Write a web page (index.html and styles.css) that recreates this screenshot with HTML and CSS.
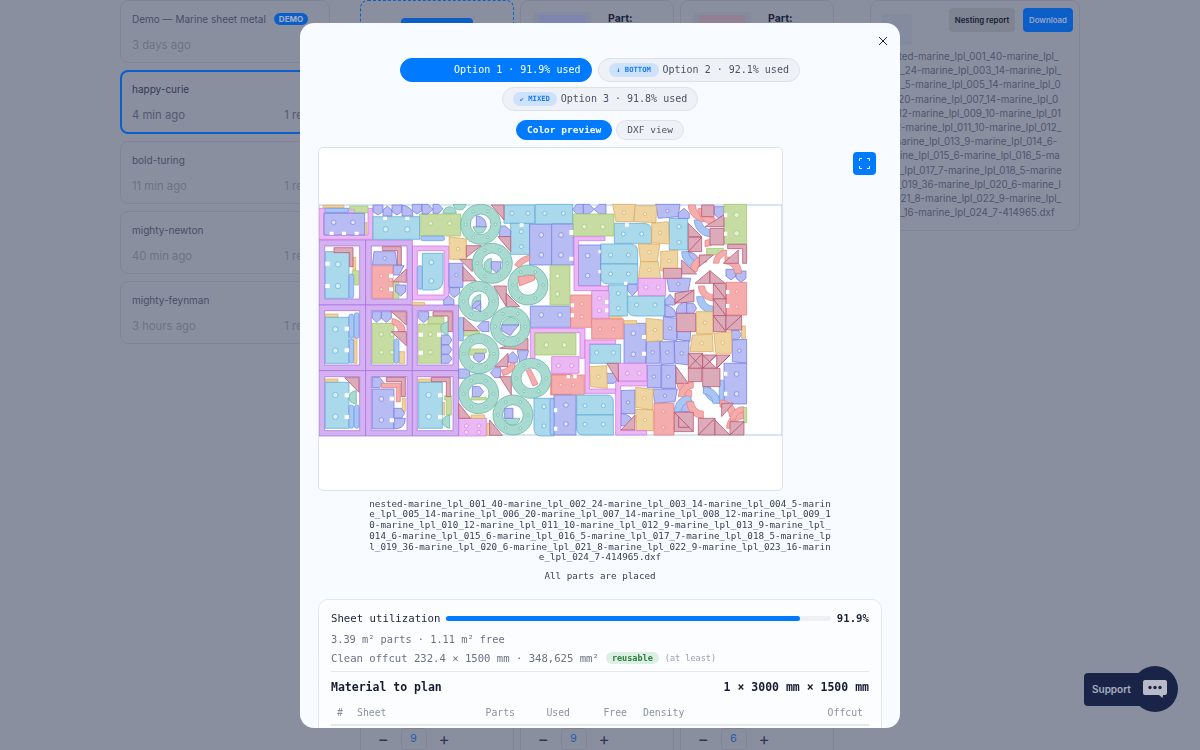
FILE: index.html
```html
<!DOCTYPE html>
<html lang="en">
<head>
    <meta charset="UTF-8">
    <title>Nesting results</title>
    <link rel="stylesheet" href="styles.css">
</head>
<body>

<div class="app">
    <div class="sidebar">
        <div class="job">
            <div class="job-title">Demo — Marine sheet metal <span class="demo">DEMO</span></div>
            <div class="job-sub"><span>3 days ago</span></div>
        </div>
        <div class="job job-active">
            <div class="job-title">happy-curie</div>
            <div class="job-sub"><span>4 min ago</span><span>1 result</span></div>
        </div>
        <div class="job">
            <div class="job-title">bold-turing</div>
            <div class="job-sub"><span>11 min ago</span><span>1 result</span></div>
        </div>
        <div class="job">
            <div class="job-title">mighty-newton</div>
            <div class="job-sub"><span>40 min ago</span><span>1 result</span></div>
        </div>
        <div class="job">
            <div class="job-title">mighty-feynman</div>
            <div class="job-sub"><span>3 hours ago</span><span>1 result</span></div>
        </div>
    </div>

    <div class="parts">
        <div class="part part-add">
            <div class="add-btn"></div>
        </div>
        <div class="part">
            <div class="part-head"><div class="thumb"><i class="thumb-pe"></i></div><strong>Part:</strong></div>
        </div>
        <div class="part">
            <div class="part-head"><div class="thumb"><i class="thumb-ro"></i></div><strong>Part:</strong></div>
        </div>
        <div class="part part-low">
            <div class="part-head"><strong>Part:</strong></div>
            <div class="stepper"><span>−</span><b>9</b><span>+</span></div>
        </div>
        <div class="part part-low">
            <div class="part-head"><strong>Part:</strong></div>
            <div class="stepper"><span>−</span><b>9</b><span>+</span></div>
        </div>
        <div class="part part-low">
            <div class="part-head"><strong>Part:</strong></div>
            <div class="stepper"><span>−</span><b>6</b><span>+</span></div>
        </div>
    </div>

    <div class="summary">
        <div class="summary-top">
            <div class="thumb thumb-small"></div>
            <button class="btn">Nesting report</button>
            <button class="btn btn-blue">Download</button>
        </div>
        <div class="summary-name">nested-marine_lpl_001_40-marine_lpl_002_24-marine_lpl_003_14-marine_lpl_004_5-marine_lpl_005_14-marine_lpl_006_20-marine_lpl_007_14-marine_lpl_008_12-marine_lpl_009_10-marine_lpl_010_12-marine_lpl_011_10-marine_lpl_012_9-marine_lpl_013_9-marine_lpl_014_6-marine_lpl_015_6-marine_lpl_016_5-marine_lpl_017_7-marine_lpl_018_5-marine_lpl_019_36-marine_lpl_020_6-marine_lpl_021_8-marine_lpl_022_9-marine_lpl_023_16-marine_lpl_024_7-414965.dxf</div>
    </div>
</div>

<div class="support">
    <span class="support-label">Support</span>
    <span class="support-round">
        <svg width="26" height="20" viewBox="0 0 26 20">
            <path fill="#fff" d="M3 1H23Q25 1 25 3V14Q25 16 23 16H21L20.500 19L17 16H3Q1 16 1 14V3Q1 1 3 1Z"/>
            <circle cx="8" cy="8.500" r="1.700" fill="#1d2849"/>
            <circle cx="13" cy="8.500" r="1.700" fill="#1d2849"/>
            <circle cx="18" cy="8.500" r="1.700" fill="#1d2849"/>
        </svg>
    </span>
</div>

<div class="overlay">
    <div class="modal">
        <svg class="close" width="10" height="10" viewBox="0 0 10 10">
            <path d="M1 1L9 9M9 1L1 9" stroke="#1f2937" stroke-width="1"/>
        </svg>

        <div class="options">
            <div class="chip chip-on"><span class="tag tag-blank"></span>Option 1 · 91.9% used</div>
            <div class="chip"><span class="tag">↓ BOTTOM</span>Option 2 · 92.1% used</div>
            <div class="chip"><span class="tag">⇙ MIXED</span>Option 3 · 91.8% used</div>
        </div>

        <div class="views">
            <div class="view view-on">Color preview</div>
            <div class="view">DXF view</div>
        </div>

        <div class="preview-row">
            <div class="preview">
                <svg class="nest" width="463" height="342" viewBox="319 148 463 342">
                    <defs>
                        <g id="ring">
                            <path fill-rule="evenodd" d="M-60 0A60 60 0 1 0 60 0A60 60 0 1 0 -60 0ZM-31 0A31 31 0 1 1 31 0A31 31 0 1 1 -31 0Z"/>
                            <circle class="h" cx="45" r="4"/><circle class="h" cx="-45" r="4"/>
                            <circle class="h" cx="22" cy="39" r="4"/><circle class="h" cx="-22" cy="39" r="4"/>
                            <circle class="h" cx="22" cy="-39" r="4"/><circle class="h" cx="-22" cy="-39" r="4"/>
                        </g>
                        <path id="arc" d="M50 0A50 50 0 0 1 0 50V29A29 29 0 0 0 29 0Z"/>
                    </defs>
                    <rect class="sheet" x="319" y="205" width="463" height="230"/>

                    <!-- left half of the sheet -->
                    <g transform="translate(318 200) scale(.3333)">
                        <g class="s-pi">
                            <path fill-rule="evenodd" d="M3 25H165V118H3ZM18 38V105H150V38Z"/>
                            <path fill-rule="evenodd" d="M283 138H392V300H283ZM298 152V285H378V152Z"/>
                            <path d="M422 655H505V708H422Z"/>
                            <circle class="h" cx="445" cy="678" r="6"/><circle class="h" cx="483" cy="678" r="6"/><circle class="h" cx="445" cy="697" r="6"/><circle class="h" cx="483" cy="697" r="6"/>
                        </g>
                        <g class="s-pu" fill-rule="evenodd">
                            <path d="M3 120H143V315H3ZM20 138V297H125V138Z"/>
                            <path d="M143 120H283V315H143ZM160 138V297H267V138Z"/>
                            <path d="M3 315H143V512H3ZM20 332V495H125V332Z"/>
                            <path d="M143 315H283V512H143ZM160 332V495H267V332Z"/>
                            <path d="M283 315H422V512H283ZM298 332V495H405V332Z"/>
                            <path d="M3 512H143V708H3ZM20 530V692H125V530Z"/>
                            <path d="M143 512H283V708H143ZM160 530V692H267V530Z"/>
                            <path d="M283 512H422V708H283ZM298 530V692H405V530Z"/>
                        </g>
                        <g class="s-ta">
                            <path d="M15 16H78V23H15Z"/><path d="M138 68H147V103H138Z"/><path d="M105 172H113V210H105Z"/>
                            <path d="M283 307H320V315H283Z"/><path d="M22 342H60V352H22Z"/><path d="M107 412H117V490H107Z"/>
                            <path d="M243 455H260V490H243Z"/><path d="M22 537H60V547H22Z"/><path d="M253 595H262V635H253Z"/>
                            <path d="M302 537H340V547H302Z"/><path d="M373 607H380V645H373Z"/><path d="M460 645H500V655H460Z"/><path d="M507 670H515V706H507Z"/>
                            <path d="M393 110L445 117V178H395Z"/><circle class="h" cx="420" cy="147" r="5"/>
                        </g>
                        <g class="s-gr">
                            <path d="M95 18H150V38H110V28H95Z"/><path d="M103 212H122V255H110V225H103Z"/>
                            <path d="M305 42H428V108H305Z"/><circle class="h" cx="338" cy="70" r="6"/><circle class="h" cx="395" cy="70" r="6"/>
                            <path d="M225 248H243V295H225Z"/><path d="M330 350H378V372H330Z"/>
                            <path d="M163 370H228V490H163Z"/><circle class="h" cx="190" cy="403" r="6"/><circle class="h" cx="222" cy="403" r="6"/><circle class="h" cx="190" cy="457" r="6"/><circle class="h" cx="222" cy="457" r="6"/>
                            <path d="M302 372H370V490H302Z"/><circle class="h" cx="337" cy="403" r="6"/><circle class="h" cx="337" cy="457" r="6"/>
                            <path d="M380 587H400V645H385V600H380Z"/><path d="M437 392H485V408H437Z"/>
                        </g>
                        <g class="s-bl">
                            <path d="M165 50H305V118H165Z"/><circle class="h" cx="203" cy="88" r="8"/><circle class="h" cx="268" cy="88" r="8"/>
                            <path d="M22 155H93V295H22Z"/><circle class="h" cx="60" cy="193" r="8"/><circle class="h" cx="60" cy="258" r="8"/>
                            <path d="M313 160H375V240Q375 270 345 270H313Z"/><circle class="h" cx="340" cy="187" r="7"/><circle class="h" cx="340" cy="243" r="7"/>
                            <path d="M22 352H93V490H22Z"/><circle class="h" cx="52" cy="388" r="8"/><circle class="h" cx="52" cy="452" r="8"/>
                            <path d="M22 547H93V685H22Z"/><circle class="h" cx="52" cy="585" r="8"/><circle class="h" cx="52" cy="650" r="8"/>
                            <path d="M302 547H373V685H302Z"/><circle class="h" cx="332" cy="585" r="8"/><circle class="h" cx="332" cy="650" r="8"/>
                            <path d="M558 15H650V70H558Z"/><circle class="h" cx="582" cy="40" r="6"/><circle class="h" cx="630" cy="40" r="6"/>
                            <path d="M578 70H635V163H578Z"/><circle class="h" cx="610" cy="95" r="6"/><circle class="h" cx="610" cy="140" r="6"/>
                            <path d="M648 595H708V708H670Q648 708 648 685Z"/><circle class="h" cx="678" cy="620" r="6"/><circle class="h" cx="678" cy="678" r="6"/>
                        </g>
                        <g class="s-sl">
                            <rect x="20" y="25" width="72" height="12" rx="6"/><rect x="93" y="222" width="14" height="73" rx="7"/>
                            <rect x="298" y="197" width="15" height="71" rx="7"/><rect x="308" y="108" width="72" height="14" rx="7"/>
                            <rect x="93" y="342" width="14" height="73" rx="7"/><rect x="109" y="338" width="14" height="77" rx="7"/><rect x="93" y="417" width="14" height="73" rx="7"/>
                            <rect x="228" y="417" width="15" height="73" rx="7"/><rect x="93" y="615" width="14" height="70" rx="7"/><rect x="109" y="615" width="14" height="70" rx="7"/>
                            <rect x="422" y="352" width="15" height="71" rx="7"/>
                        </g>
                        <g class="s-pe">
                            <path d="M18 40H140V105H18Z"/><circle class="h" cx="47" cy="67" r="7"/><circle class="h" cx="105" cy="67" r="7"/>
                            <path d="M165 15H195V35L180 45L165 35Z"/><path d="M195 30L208 18L222 30V48H195Z"/><path d="M222 15H252V35L237 45L222 35Z"/>
                            <path d="M252 15Q285 20 285 48H252Z"/><path d="M283 13H312V32L297 42L283 32Z"/><path d="M312 13H330L345 28L330 42H312Z"/><path d="M345 13H362L375 26L362 40H345Z"/>
                            <path d="M168 155H232L237 195H163Z"/><circle class="h" cx="200" cy="175" r="5"/>
                            <path d="M225 197H258L243 225L225 225Z"/><path d="M233 255H263V275L248 288L233 275Z"/>
                            <path d="M393 190H435V262H393Z"/><circle class="h" cx="415" cy="225" r="5"/>
                            <path d="M395 263H425V280L408 293L395 280Z"/><path d="M392 287L408 300V314H377V300Z"/>
                            <path d="M163 335H190V355L176 367L163 355Z"/><path d="M190 335H220V355L205 367L190 355Z"/><path d="M302 335H332V355L317 368L302 355Z"/>
                            <path d="M370 405H392L402 420L392 435H370Z"/><path d="M370 435H392L402 449L392 463H370Z"/><path d="M370 463H392L402 476L392 490H370Z"/>
                            <path d="M163 532H185L197 548L185 563H163Z"/><path d="M163 567H228V687H163Z"/><circle class="h" cx="190" cy="597" r="7"/><circle class="h" cx="190" cy="660" r="7"/>
                            <path d="M228 625H250L260 640L250 655H228Z"/><path d="M228 655H262Q262 687 228 687Z"/>
                            <path d="M478 380L492 365H513V395H492Z"/><path d="M422 507H455V535H422Z"/><path d="M517 518L530 503H548V533H530Z"/>
                            <path d="M545 78L562 78L578 92V110H545Z"/>
                            <path d="M570 470L584 455L598 470V487H570Z"/><path d="M598 452H632L622 487H605Z"/>
                            <path d="M635 72H703V195H635Z"/><circle class="h" cx="670" cy="105" r="7"/><circle class="h" cx="670" cy="165" r="7"/>
                            <path d="M637 318H758V382H637Z"/><circle class="h" cx="670" cy="345" r="7"/><circle class="h" cx="726" cy="345" r="7"/>
                        </g>
                        <g class="s-re">
                            <path d="M163 197H225V295H163Z"/><circle class="h" cx="190" cy="228" r="5"/><circle class="h" cx="190" cy="268" r="5"/><circle class="h" cx="218" cy="240" r="5"/><circle class="h" cx="218" cy="268" r="5"/>
                            <path d="M222 355Q262 365 262 395H242Q240 378 222 372Z"/>
                            <path d="M190 550H247V605H235V563H190Z"/>
                            <path d="M698 522H760V585H698Z"/>
                        </g>
                        <g class="s-ro">
                            <path d="M48 143H105V200H95V158H48Z"/><path d="M193 140H250V195H238V152H193Z"/>
                            <path d="M225 245L265 207V247Z"/><path d="M220 335H265V375Z"/><path d="M220 395H265V437Z"/>
                            <path d="M345 335H403V395H390V348H345Z"/><path d="M80 533H123V577Z"/>
                            <path d="M205 532H262V590H250V545H205Z"/><path d="M340 532H397V590H385V545H340Z"/>
                            <path d="M520 15H558V60Z"/><path d="M540 110H578V155Z"/><path d="M445 137H490L445 172Z"/>
                            <path d="M425 178H463V215Z"/><path d="M435 200L475 243H435Z"/><path d="M527 258H565V320Z"/><path d="M565 280L605 320H565Z"/>
                            <path d="M437 352L480 392H437Z"/><path d="M545 445L630 415V450Z"/><path d="M530 500L570 460V500Z"/>
                            <path d="M545 530H580V585Z"/><path d="M422 610L458 655H422Z"/><path d="M515 660L553 706H515Z"/>
                        </g>
                        <g class="s-te">
                            <path d="M375 40A20 20 0 0 1 415 40Z"/><path d="M405 13H445Q440 30 425 30Q410 30 405 13Z"/>
                            <path d="M390 365V405Q368 400 368 385Q368 370 390 365Z"/><path d="M115 572V612Q93 610 93 592Q93 575 115 572Z"/><path d="M395 645V685Q373 680 373 665Q373 650 395 645Z"/>
                            <use href="#ring" x="488" y="73"/><use href="#ring" x="523" y="190"/><use href="#ring" x="630" y="255"/>
                            <use href="#ring" x="482" y="304"/><use href="#ring" x="577" y="380"/><use href="#ring" x="483" y="461"/>
                            <use href="#ring" x="482" y="581"/><use href="#ring" x="640" y="535"/><use href="#ring" x="585" y="645"/>
                            <path d="M466 80H505Q500 100 485 100Q470 100 466 80Z"/><path d="M520 175V218Q498 215 498 196Q498 180 520 175Z"/>
                            <path d="M488 283V322H462Q458 290 488 283Z"/><path d="M552 375Q555 355 578 352Q600 355 603 375Z"/>
                            <path d="M560 655H606Q600 675 583 675Q565 675 560 655Z"/>
                        </g>
                        <g class="s-pe">
                            <path d="M475 47Q505 50 505 80H475Z"/><path d="M520 185H550L547 205L535 218L520 205Z"/>
                            <path d="M488 325H462V318L475 303H488Z"/><path d="M551 375H603L588 392L577 407L551 392Z"/>
                            <path d="M467 460H500V475L483 488L467 475Z"/><path d="M463 560H485L497 575L485 590H463Z"/>
                            <path d="M560 625L585 625V655H560Z"/><path d="M470 325L488 310V335Z"/>
                        </g>
                        <g class="s-gr">
                            <path d="M455 447H505V458H470V465H455Z"/><path d="M460 592H505V600H460Z"/>
                        </g>
                        <g class="s-re">
                            <path d="M600 230L650 225V240L605 258Z"/><path d="M590 195Q605 172 635 165V180Q615 188 605 202Z"/>
                            <path d="M625 512L638 508L660 552L645 558Z"/><path d="M550 510Q575 505 578 488L592 490Q590 520 555 527Z"/>
                        </g>
                        <g class="notch">
                            <path d="M22 185H35V197H22ZM22 252H35V264H22Z"/>
                            <path d="M80 380H93V392H80ZM80 445H93V457H80Z"/><path d="M80 645H93V657H80ZM80 580H93V592H80Z"/>
                            <path d="M360 580H373V592H360ZM360 645H373V657H360Z"/>
                            <path d="M195 50H207V60H195ZM262 50H274V60H262Z"/>
                            <path d="M35 95H47V105H35ZM72 95H84V105H72ZM110 95H122V105H110Z"/>
                            <path d="M215 590H228V602H215ZM215 655H228V667H215Z"/>
                            <path d="M302 398H315V410H302ZM302 452H315V464H302ZM357 398H370V410H357Z"/>
                            <path d="M213 222H225V234H213ZM213 262H225V274H213Z"/>
                            <path d="M605 70H617V80H605Z"/>
                        </g>
                    </g>

                    <!-- right half of the sheet -->
                    <g transform="translate(550 200) scale(.3333)">
                        <g class="s-bl">
                            <path d="M-44 13H68V72H-44Z"/><circle class="h" cx="-16" cy="40" r="6"/><circle class="h" cx="40" cy="40" r="6"/>
                            <path d="M193 70H280Q305 70 305 95V130H193Z"/><circle class="h" cx="220" cy="102" r="6"/><circle class="h" cx="275" cy="102" r="6"/>
                            <path d="M358 55H413V150H358Z"/><circle class="h" cx="387" cy="80" r="6"/><circle class="h" cx="387" cy="127" r="6"/>
                            <path d="M152 132H240Q263 132 263 155V192H152Z"/><circle class="h" cx="182" cy="165" r="6"/><circle class="h" cx="235" cy="165" r="6"/>
                            <path d="M152 192H263V252H175Q152 252 152 230Z"/><circle class="h" cx="182" cy="222" r="6"/><circle class="h" cx="235" cy="222" r="6"/>
                            <path d="M175 255H232V348H175Z"/><circle class="h" cx="205" cy="280" r="6"/><circle class="h" cx="205" cy="325" r="6"/>
                            <path d="M233 288H345V348H255Q233 348 233 325Z"/><circle class="h" cx="260" cy="315" r="6"/><circle class="h" cx="315" cy="315" r="6"/>
                            <path d="M120 433H212V490H120Z"/><circle class="h" cx="140" cy="458" r="6"/><circle class="h" cx="190" cy="458" r="6"/>
                            <path d="M80 585H170Q190 585 190 605V645H80Z"/><circle class="h" cx="105" cy="617" r="6"/><circle class="h" cx="160" cy="617" r="6"/>
                            <path d="M80 645H190V705H100Q80 705 80 685Z"/><circle class="h" cx="105" cy="673" r="6"/><circle class="h" cx="160" cy="673" r="6"/>
                        </g>
                        <g class="s-pe">
                            <path d="M5 72H70V195H5Z"/><circle class="h" cx="33" cy="105" r="7"/><circle class="h" cx="33" cy="165" r="7"/>
                            <path d="M68 28L80 13H100V42H80Z"/><path d="M100 13H118L132 28L118 42H100Z"/><path d="M132 28L148 13H168V42H148Z"/>
                            <path d="M317 13H390L385 50L325 55Z"/><circle class="h" cx="352" cy="33" r="5"/>
                            <path d="M385 40L402 25L418 40V55H385Z"/><path d="M492 20H522V42L507 55L492 42Z"/>
                            <path d="M85 135H152V258H85Z"/><circle class="h" cx="113" cy="167" r="7"/><circle class="h" cx="113" cy="227" r="7"/>
                            <path d="M410 155Q448 158 448 192H418Q415 170 410 155Z"/>
                            <path d="M528 208H558V228L543 240L528 228Z"/><path d="M558 213H588V235L573 247L558 235Z"/>
                            <path d="M350 232L422 235L415 275H358Z"/><circle class="h" cx="385" cy="252" r="5"/>
                            <path d="M233 253H262V272L247 287L233 272Z"/>
                            <path d="M345 300L360 283L375 300V315H345Z"/><path d="M345 315Q378 320 378 350H345Z"/><path d="M378 340Q378 310 410 305V340Z"/><path d="M410 310H430L440 325L430 340H410Z"/>
                            <path d="M545 390H565L575 404L565 418H545Z"/>
                            <path d="M222 370H288V490H222Z"/><circle class="h" cx="250" cy="400" r="7"/><circle class="h" cx="250" cy="463" r="7"/>
                            <path d="M340 350L382 355L380 422L340 418Z"/><circle class="h" cx="360" cy="385" r="5"/>
                            <path d="M382 355L425 352L420 425L382 418Z"/><circle class="h" cx="403" cy="388" r="5"/>
                            <path d="M290 425L330 422V490H288Z"/><circle class="h" cx="308" cy="457" r="5"/>
                            <path d="M330 425L373 425V490L333 493Z"/><circle class="h" cx="352" cy="457" r="5"/>
                            <path d="M373 425L417 422V495L375 490Z"/><circle class="h" cx="395" cy="460" r="5"/>
                            <path d="M547 420L590 418V490L547 485Z"/><circle class="h" cx="568" cy="452" r="5"/>
                            <path d="M170 520H192L205 535L192 550H170Z"/>
                            <path d="M292 495H333V563H292Z"/><circle class="h" cx="312" cy="530" r="5"/>
                            <path d="M335 495H377V565H335Z"/><circle class="h" cx="355" cy="530" r="5"/>
                            <path d="M522 490H590V612H522Z"/><circle class="h" cx="560" cy="522" r="7"/><circle class="h" cx="560" cy="582" r="7"/>
                            <path d="M12 585H78V705H12Z"/><circle class="h" cx="48" cy="615" r="7"/><circle class="h" cx="48" cy="672" r="7"/>
                            <path d="M213 572L255 570V642L215 640Z"/><circle class="h" cx="234" cy="607" r="5"/>
                            <path d="M308 567H382L375 605L315 610Z"/><circle class="h" cx="345" cy="587" r="5"/>
                            <path d="M213 640Q250 645 250 675L213 678Z"/><path d="M385 635Q388 605 425 600V635Z"/>
                        </g>
                        <g class="s-sl">
                            <use href="#arc" transform="translate(483 60) rotate(90)"/><use href="#arc" transform="translate(445 155) rotate(90)"/>
                            <use href="#arc" transform="translate(490 290) rotate(90)"/><use href="#arc" transform="translate(510 560) rotate(90)"/>
                            <use href="#arc" transform="translate(460 610) rotate(-90)"/><use href="#arc" transform="translate(423 635) rotate(180)"/>
                            <rect x="508" y="540" width="14" height="70" rx="7"/><rect x="0" y="595" width="12" height="110" rx="6"/>
                        </g>
                        <g class="s-gr">
                            <path d="M70 42H192V108H70Z"/><circle class="h" cx="103" cy="80" r="7"/><circle class="h" cx="158" cy="80" r="7"/>
                            <path d="M522 13H590V132H522Z"/><circle class="h" cx="560" cy="45" r="8"/><circle class="h" cx="560" cy="100" r="8"/>
                            <path d="M0 197H60V315H0Z"/><circle class="h" cx="22" cy="228" r="7"/><circle class="h" cx="22" cy="282" r="7"/>
                            <path d="M470 145H520V165H470Z"/><path d="M568 622H590V668H580V635H568Z"/>
                        </g>
                        <g class="s-ta">
                            <path d="M188 13H258L250 65H198Z"/><circle class="h" cx="222" cy="38" r="5"/>
                            <path d="M255 17H320L318 68L252 65Z"/><circle class="h" cx="285" cy="42" r="5"/>
                            <path d="M305 70L355 65L358 132L305 128Z"/><circle class="h" cx="330" cy="98" r="5"/>
                            <path d="M265 132H330L322 185H272Z"/><circle class="h" cx="298" cy="157" r="5"/>
                            <path d="M272 185H325L332 235H265Z"/><circle class="h" cx="298" cy="210" r="5"/>
                            <path d="M332 155L383 150V218L332 212Z"/><circle class="h" cx="358" cy="183" r="5"/>
                            <path d="M288 355L338 360V422L290 425Z"/><circle class="h" cx="315" cy="390" r="5"/>
                            <path d="M438 335H490V400L440 402Z"/><circle class="h" cx="465" cy="368" r="5"/>
                            <path d="M427 405L487 403L490 455H420Z"/><circle class="h" cx="455" cy="430" r="5"/>
                            <path d="M492 400L545 395V460H497Z"/><circle class="h" cx="518" cy="428" r="5"/>
                            <path d="M118 500L170 497L172 565L122 560Z"/><circle class="h" cx="145" cy="530" r="5"/>
                            <path d="M257 562L310 568L308 630L257 622Z"/><circle class="h" cx="283" cy="595" r="5"/>
                            <path d="M257 628L310 630V692H260Z"/><circle class="h" cx="285" cy="660" r="5"/>
                            <path d="M175 350H215V357H175Z"/><path d="M222 362H260V372H222Z"/><path d="M575 378H586V415H575Z"/>
                        </g>
                        <g class="s-pi">
                            <path d="M72 110H165V122H85V258H175V272H72Z"/>
                            <path d="M-59 385H105V475H90V398H-45V475H-59Z"/>
                            <path d="M265 235H347V287H265Z"/><circle class="h" cx="288" cy="262" r="6"/><circle class="h" cx="325" cy="262" r="6"/>
                            <path d="M125 272H177V355H125Z"/><circle class="h" cx="148" cy="295" r="6"/><circle class="h" cx="148" cy="332" r="6"/>
                            <path d="M5 470H87V520H5Z"/><circle class="h" cx="25" cy="497" r="6"/><circle class="h" cx="65" cy="497" r="6"/>
                            <path d="M105 420H197V432H118V567H197V580H105Z"/>
                            <path d="M205 490H290V543H205Z"/><circle class="h" cx="232" cy="520" r="6"/><circle class="h" cx="268" cy="520" r="6"/>
                            <path d="M197 545H292V558H212V692H290V705H197Z"/>
                        </g>
                        <g class="s-gr">
                            <path d="M-45 400H78V465H-45Z"/><circle class="h" cx="-11" cy="435" r="7"/><circle class="h" cx="43" cy="435" r="7"/>
                        </g>
                        <g class="s-re">
                            <path d="M62 285H125V382H62Z"/><circle class="h" cx="95" cy="312" r="5"/><circle class="h" cx="95" cy="350" r="5"/>
                            <path d="M125 357H220V417H125Z"/><circle class="h" cx="150" cy="388" r="5"/><circle class="h" cx="190" cy="388" r="5"/>
                            <path d="M5 525H103V583H5Z"/><circle class="h" cx="32" cy="555" r="5"/><circle class="h" cx="70" cy="555" r="5"/>
                            <path d="M528 247H590V345H528Z"/><circle class="h" cx="560" cy="275" r="5"/><circle class="h" cx="560" cy="320" r="5"/>
                            <path d="M312 610H372V705H312Z"/><circle class="h" cx="340" cy="635" r="5"/><circle class="h" cx="340" cy="682" r="5"/>
                            <use href="#arc" transform="translate(465 15) rotate(90)"/><use href="#arc" transform="translate(495 25) rotate(90)"/>
                            <use href="#arc" transform="translate(465 95) scale(.9)"/><use href="#arc" transform="translate(470 215) rotate(180)"/>
                            <use href="#arc" transform="translate(525 220) rotate(-90)"/><use href="#arc" transform="translate(530 190) rotate(180) scale(.8)"/>
                            <use href="#arc" transform="translate(490 258) rotate(90) scale(.9)"/>
                            <use href="#arc" transform="translate(425 545) rotate(90) scale(.9)"/><use href="#arc" transform="translate(430 590) rotate(180) scale(.9)"/>
                            <use href="#arc" transform="translate(460 605) rotate(90)"/><use href="#arc" transform="translate(510 650) rotate(-90)"/>
                            <use href="#arc" transform="translate(580 685) rotate(180)"/><use href="#arc" transform="translate(580 660) rotate(180) scale(.8)"/>
                        </g>
                        <g class="s-ro">
                            <path d="M415 70L455 110H415Z"/><path d="M415 112H455V155H415Z"/><path d="M465 80L522 45V80Z"/><path d="M455 15H492V50H455Z"/>
                            <path d="M480 85H522V135H480Z"/><path d="M533 133H590V190H578V146H533Z"/><path d="M520 190L565 150V190Z"/>
                            <path d="M340 205H395V235H340Z"/><path d="M395 180L440 222H395Z"/><path d="M448 165H490L448 200Z"/>
                            <path d="M435 250L480 212V250Z"/><path d="M480 212L525 250H480Z"/>
                            <path d="M490 250H528V297H490Z"/><path d="M490 297H528V347H490Z"/><path d="M490 347H528V395H490Z"/>
                            <path d="M528 347H575V390H528Z"/><path d="M375 280L432 270V305L375 310Z"/><path d="M380 340H437V395H380Z"/>
                            <path d="M415 460H458V505Z"/><path d="M415 460L458 505H415Z"/><path d="M458 465H500L458 505Z"/><path d="M500 465H540L500 505Z"/><path d="M458 465L500 505H458Z"/>
                            <path d="M415 505H455V545H415Z"/><path d="M458 505H510V560H458Z"/><path d="M378 500L415 550H378Z"/><path d="M170 490H205V545Z"/>
                            <path d="M213 690L255 645V690Z"/><path d="M373 637H430V695H373Z"/><path d="M445 655H495V705H445Z"/><path d="M495 660L540 705H495Z"/>
                            <path d="M540 665H582V705H540Z"/><path d="M515 610H550L515 650Z"/>
                        </g>
                        <g class="lines">
                            <path d="M415 155L455 112M490 250L528 297M490 297L528 347M490 347L528 395M528 390L575 347M375 310L432 270M415 505L458 460M458 505L500 465M500 505L540 465M445 705L495 655M540 705L582 665M373 637L430 695M386 650V682H418"/>
                        </g>
                        <g class="notch">
                            <path d="M58 90H70V105H58ZM58 170H70V182H58Z"/>
                            <path d="M145 150H152V160H145ZM145 210H152V220H145Z"/>
                            <path d="M225 70H237V80H225Z"/><path d="M222 245H232V255H222Z"/>
                            <path d="M165 300H175V312H165ZM165 325H175V337H165Z"/>
                            <path d="M276 405H288V417H276ZM276 455H288V467H276Z"/>
                            <path d="M522 515H532V527H522ZM522 575H532V587H522Z"/>
                            <path d="M528 270H538V282H528ZM528 312H538V324H528Z"/>
                            <path d="M62 310H72V322H62ZM62 340H72V352H62Z"/>
                            <path d="M50 525H60V535H50ZM70 525H80V535H70Z"/>
                            <path d="M12 625H22V637H12ZM12 680H22V692H12Z"/>
                            <path d="M522 40H532V52H522ZM522 95H532V107H522Z"/>
                        </g>
                    </g>
                </svg>
            </div>
            <div class="expand">
                <svg width="11" height="11" viewBox="0 0 11 11">
                    <path d="M.5 3V.5H3M8 .5H10.500V3M10.500 8V10.500H8M3 10.500H.5V8" fill="none" stroke="#fff" stroke-width=".9"/>
                </svg>
            </div>
        </div>

        <div class="file-name">nested-marine_lpl_001_40-marine_lpl_002_24-marine_lpl_003_14-marine_lpl_004_5-marine_lpl_005_14-marine_lpl_006_20-marine_lpl_007_14-marine_lpl_008_12-marine_lpl_009_10-marine_lpl_010_12-marine_lpl_011_10-marine_lpl_012_9-marine_lpl_013_9-marine_lpl_014_6-marine_lpl_015_6-marine_lpl_016_5-marine_lpl_017_7-marine_lpl_018_5-marine_lpl_019_36-marine_lpl_020_6-marine_lpl_021_8-marine_lpl_022_9-marine_lpl_023_16-marine_lpl_024_7-414965.dxf</div>
        <div class="placed">All parts are placed</div>

        <div class="stats">
            <div class="util">
                <span class="util-label">Sheet utilization</span>
                <div class="bar"><div class="bar-fill" style="width: 91.9%"></div></div>
                <span class="util-value">91.9%</span>
            </div>
            <div class="stat-line">3.39 m² parts · 1.11 m² free</div>
            <div class="stat-line stat-offcut">Clean offcut 232.4 × 1500 mm · 348,625 mm²<span class="pill">reusable</span><span class="least">(at least)</span></div>
            <div class="plan">
                <span>Material to plan</span>
                <span>1 × 3000 mm × 1500 mm</span>
            </div>
            <div class="table-head">
                <span class="th-num">#</span>
                <span>Sheet</span>
                <span class="th-right">Parts</span>
                <span class="th-right">Used</span>
                <span class="th-right">Free</span>
                <span class="th-density">Density</span>
                <span class="th-right th-last">Offcut</span>
            </div>
        </div>
    </div>
</div>

</body>
</html>
```

FILE: styles.css
```css
body {
    margin: 0;
    height: 750px;
    overflow: hidden;
    background-color: #bec1c8;
    font-family: "Inter", "Liberation Sans", sans-serif;
}

.app {
    display: flex;
    align-items: flex-start;
    width: 960px;
    margin: 0 auto;
}

/* job list */
.sidebar {
    display: flex;
    flex-direction: column;
    gap: 7px;
    width: 210px;
    margin-right: 30px;
}

.job {
    box-sizing: border-box;
    height: 63.3px;
    padding: 11px 11px;
    border: 1px solid #aeb1bb;
    border-radius: 8px;
}

.job-active {
    padding: 10px;
    border: 2px solid #0a7bff;
}

.job-title {
    display: flex;
    align-items: center;
    gap: 8px;
    height: 14px;
    font-size: 10px;
    color: #5f6275;
}

.job-active .job-title {
    color: #44475c;
}

.job-sub {
    display: flex;
    justify-content: space-between;
    margin-top: 12px;
    margin-right: -4px;
    font-size: 11.300px;
    color: #94979f;
}

.job-active .job-sub {
    color: #70737f;
}

.demo {
    padding: 1px 5px;
    border-radius: 7px;
    background-color: #0a7bff;
    color: #e3ecff;
    font-size: 8px;
    font-weight: 700;
}

/* part cards behind the dialog */
.parts {
    display: grid;
    grid-template-columns: repeat(3, 154px);
    grid-template-rows: 200px 570px;
    gap: 6px;
    width: 480px;
    margin-right: 30px;
}

.part {
    box-sizing: border-box;
    display: flex;
    flex-direction: column;
    justify-content: space-between;
    padding: 11px 12px 25px;
    border: 1px solid #aeb1bb;
    border-radius: 8px;
}

.part-add {
    border: 1px dashed #0a7bff;
    justify-content: flex-start;
}

.add-btn {
    width: 72px;
    height: 24px;
    margin: 6px auto 0;
    border-radius: 4px;
    background-color: #0a7bff;
}

.part-head {
    display: flex;
    gap: 17px;
    font-size: 10.500px;
    color: #21263c;
}

.thumb {
    width: 58px;
    height: 40px;
    padding: 3px 6px;
    box-sizing: border-box;
    border-radius: 4px;
    background-color: #b5bac6;
}

.thumb i {
    display: block;
    height: 100%;
}

.thumb-pe {
    background-color: #aab1dd;
}

.thumb-ro {
    background-color: #c8aab4;
}

.stepper {
    display: flex;
    align-items: center;
    gap: 10px;
    height: 22px;
    margin-left: 2.500px;
    font-size: 17px;
    color: #3c4156;
}

.stepper b {
    box-sizing: border-box;
    width: 26px;
    height: 22px;
    line-height: 20px;
    border: 1px solid #aeb1bb;
    border-radius: 4px;
    text-align: center;
    font-weight: 400;
    font-size: 10.500px;
    color: #2a70d0;
}

.stepper span {
    width: 15px;
    text-align: center;
}

/* file summary */
.summary {
    box-sizing: border-box;
    width: 210px;
    height: 231px;
    padding: 7px 6px 0 11px;
    border: 1px solid #aeb1bb;
    border-radius: 8px;
}

.summary-top {
    display: flex;
    gap: 8px;
    height: 24px;
}

.thumb-small {
    flex: none;
    width: 30px;
    height: 31px;
    margin-right: 29px;
    margin-top: 6px;
}

.btn {
    width: 66px;
    height: 24px;
    padding: 0;
    border: 0;
    border-radius: 4px;
    background-color: #aeb0b5;
    color: #151e2c;
    font-family: inherit;
    font-size: 7.800px;
    font-weight: 600;
    white-space: nowrap;
}

.btn-blue {
    width: 50px;
    background-color: #0a7bff;
    color: #cddfff;
}

.summary-name {
    width: 181px;
    margin-top: 18px;
    font-size: 9.800px;
    line-height: 14.200px;
    word-break: break-all;
    color: #6a6d80;
}

/* support widget */
.support {
    position: fixed;
    left: 1084px;
    top: 666px;
    display: flex;
    align-items: center;
}

.support-label {
    box-sizing: border-box;
    width: 60px;
    height: 33px;
    padding-left: 8px;
    line-height: 33px;
    border-radius: 4px;
    background-color: #1d2849;
    color: #e3e9f1;
    font-size: 10px;
    font-weight: 600;
}

.support-round {
    display: flex;
    align-items: center;
    justify-content: center;
    width: 46px;
    height: 46px;
    margin-left: -12px;
    border-radius: 50%;
    background-color: #1d2849;
}

/* dialog */
.overlay {
    position: fixed;
    top: 0;
    left: 0;
    right: 0;
    bottom: 0;
    display: flex;
    align-items: center;
    justify-content: center;
    background-color: rgba(20, 30, 70, .3);
    backdrop-filter: blur(.6px);
}

.modal {
    position: relative;
    box-sizing: border-box;
    width: 600px;
    height: 705px;
    padding: 35px 18px 0;
    overflow: hidden;
    border-radius: 14px;
    background-color: #f8fbff;
    font-family: "DejaVu Sans Mono", "Liberation Mono", monospace;
}

.close {
    position: absolute;
    top: 13px;
    right: 12px;
}

.options {
    display: flex;
    flex-wrap: wrap;
    justify-content: center;
    gap: 5px 6px;
}

.chip {
    box-sizing: border-box;
    display: flex;
    align-items: center;
    gap: 4px;
    height: 24px;
    padding: 0 10px;
    border: 1px solid #dde2ea;
    border-radius: 12px;
    background-color: #eef1f6;
    color: #4b5263;
    font-size: 10px;
}

.chip-on {
    border-color: #007bff;
    background-color: #007bff;
    color: #fff;
}

.tag {
    box-sizing: border-box;
    width: 50px;
    height: 14px;
    line-height: 14px;
    border-radius: 7px;
    background-color: #cfe2fb;
    color: #1a7cf0;
    text-align: center;
    font-size: 7.200px;
    font-weight: 700;
}

.chip:last-child .tag {
    width: 44px;
}

.tag-blank {
    width: 39px;
    background-color: transparent;
}

.views {
    display: flex;
    justify-content: center;
    gap: 4px;
    margin-top: 9px;
}

.view {
    box-sizing: border-box;
    height: 20px;
    padding: 0 10px;
    line-height: 18px;
    border: 1px solid #dde2ea;
    border-radius: 10px;
    background-color: #eef1f6;
    color: #4b5263;
    font-size: 9.500px;
}

.view-on {
    border-color: #007bff;
    background-color: #007bff;
    color: #fff;
    font-weight: 700;
}

.preview-row {
    display: flex;
    align-items: flex-start;
    margin-top: 7px;
}

.preview {
    box-sizing: border-box;
    width: 465px;
    height: 344px;
    border: 1px solid #dde2ea;
    border-radius: 5px;
    background-color: #fff;
    overflow: hidden;
}

.nest {
    display: block;
}

.expand {
    display: flex;
    align-items: center;
    justify-content: center;
    width: 23px;
    height: 23px;
    margin: 5px 0 0 70px;
    border-radius: 4px;
    background-color: #007bff;
}

.file-name {
    width: 464px;
    margin: 8px auto 0;
    font-size: 9.240px;
    line-height: 10.800px;
    text-align: center;
    word-break: break-all;
    color: #374151;
}

.placed {
    margin-top: 7px;
    line-height: 12px;
    text-align: center;
    font-size: 9.240px;
    color: #374151;
}

.stats {
    box-sizing: border-box;
    margin-top: 17px;
    height: 200px;
    padding: 12px 12px;
    border: 1px solid #e3e8ef;
    border-radius: 10px;
    background-color: #fbfdff;
}

.util {
    display: flex;
    align-items: center;
    gap: 6px;
    font-size: 10.700px;
    color: #1a2238;
}

.util-value {
    font-weight: 700;
}

.bar {
    flex: 1;
    height: 5px;
    border-radius: 3px;
    background-color: #edf0f5;
}

.bar-fill {
    height: 100%;
    border-radius: 3px;
    background-color: #007bff;
}

.stat-line {
    display: flex;
    align-items: center;
    margin-top: 8px;
    height: 12px;
    font-size: 10.300px;
    color: #6b7280;
}

.stat-offcut {
    margin-top: 7px;
    font-size: 10.600px;
}

.pill {
    margin-left: 7px;
    padding: 1px 6px;
    border-radius: 7px;
    background-color: #dcefe4;
    color: #2f7d3f;
    font-size: 8.500px;
    font-weight: 700;
}

.least {
    margin-left: 6px;
    font-size: 8.500px;
    color: #9aa1ad;
}

.plan {
    display: flex;
    justify-content: space-between;
    margin-top: 7px;
    padding-top: 8px;
    border-top: 1px solid #e5e9ef;
    font-size: 11.500px;
    font-weight: 700;
    color: #151c30;
}

.table-head {
    display: grid;
    grid-template-columns: 26px 100px 58px 55px 57px 1fr 70px;
    margin-top: 13px;
    padding-bottom: 6px;
    border-bottom: 2px solid #e5e9ef;
    font-size: 9.800px;
    color: #8b93a1;
}

.th-num {
    padding-left: 6px;
}

.th-right {
    text-align: right;
}

.th-density {
    padding-left: 16px;
}

.th-last {
    padding-right: 6px;
}

/* nesting picture */
.sheet {
    fill: #fff;
    stroke: #a9cbee;
    stroke-width: 1;
}

.nest g {
    stroke-width: 2.200;
    stroke-linejoin: round;
}

.h {
    fill: #fff;
    fill-opacity: .55;
    stroke-width: 1.800;
}

.notch {
    fill: #fff;
    stroke: none;
}

.s-pu { fill: #d4b2f1; stroke: #ab6de2; }
.s-pi { fill: #ecb8f4; stroke: #d274e8; }
.s-bl { fill: #a9d9ea; stroke: #5ca8d6; }
.s-pe { fill: #b7bdf2; stroke: #7179e2; }
.s-sl { fill: #a9c5f4; stroke: #6b9bea; }
.s-gr { fill: #c6dca3; stroke: #9dc56c; }
.s-re { fill: #f4acac; stroke: #e67c7c; }
.s-te { fill: #a8dad0; stroke: #66b3a3; }
.s-ta { fill: #eed4a0; stroke: #dda85c; }
.s-ro { fill: #dcabb9; stroke: #b8516f; }

.lines {
    fill: none;
    stroke: #b0405f;
}
```
